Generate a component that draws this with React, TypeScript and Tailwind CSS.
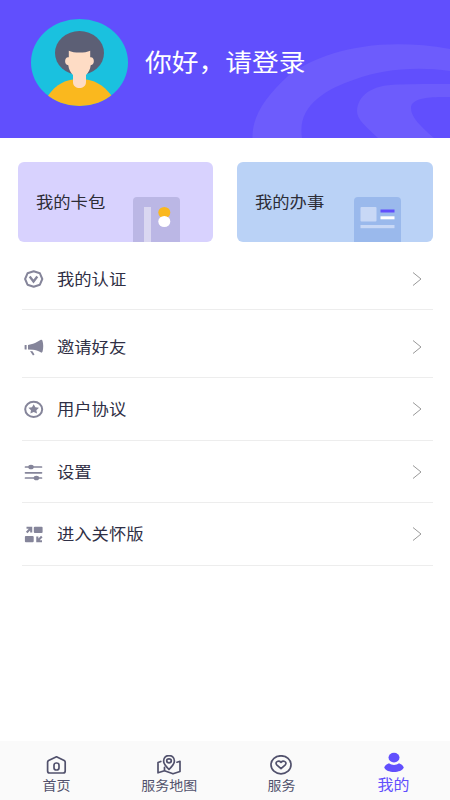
import type { ReactNode } from "react";

const Avatar = () => (
	<svg viewBox="0 0 97 87" className="h-[87px] w-[97px]">
		<clipPath id="avatar">
			<ellipse cx="48.5" cy="43.5" rx="48.5" ry="43.5" />
		</clipPath>
		<g clipPath="url(#avatar)">
			<rect width="97" height="87" fill="#1ac1df" />
			<ellipse cx="48.5" cy="34" rx="24.5" ry="22" fill="#5c5f75" />
			<path
				d="M15 80C21 70 30 60 48.5 60S76 70 83 80V90H15Z"
				fill="#fab81e"
			/>
			<path
				d="M37.800 31.700C43 34.200 54 34.200 59.200 31.700V38.300C64 37.500 64 46 59.700 46.300C59.200 50.500 57.500 53.500 55 56V63C55 71 42 71 42 63V56C39.500 53.500 37.800 50.500 37.300 46.300C33 46 33 37.500 37.800 38.300Z"
				fill="#fedcc5"
			/>
		</g>
	</svg>
);

const Swirl = () => (
	<svg
		viewBox="0 0 200 100"
		className="absolute right-0 bottom-0 h-[100px] w-[200px]"
		fill="#6d5cfc"
	>
		<path d="M2.500 100C2 78 16 58 38 38C70 14 125 -2 200 11V33C165 28 130 32 106 41C73 52 47 69 52 100Z" />
		<path d="M128 100C115 88 107 81 107 73C108 58 120 47 148 46.500C165 45.500 183 46 200 46V59C187 59 161 58 161 70C161 79 170 88 184 100Z" />
	</svg>
);

const WalletArt = () => (
	<svg viewBox="0 0 47 45" className="h-[45px] w-[47px]">
		<path d="M0 45V4Q0 0 4 0H43Q47 0 47 4V45Z" fill="#bbb7e5" />
		<path d="M11 45V10H18V45Z" fill="#dad7f1" />
		<ellipse cx="31.300" cy="15.500" rx="6" ry="5.600" fill="#fab81e" />
		<ellipse cx="31.300" cy="24.500" rx="6" ry="5.500" fill="#fff" />
	</svg>
);

const AffairsArt = () => (
	<svg viewBox="0 0 47 45" className="h-[45px] w-[47px]">
		<path d="M0 45V4Q0 0 4 0H43Q47 0 47 4V45Z" fill="#9ab9ec" />
		<rect x="6.500" y="10" width="16" height="14.500" rx="1" fill="#c8d8f6" />
		<rect x="26.500" y="12.500" width="14" height="3" fill="#614ffd" />
		<rect x="26.500" y="19.300" width="14" height="3" fill="#fff" />
		<rect x="6.500" y="28" width="34" height="3.200" fill="#c8d8f6" />
	</svg>
);

const ICON = "h-[18px] w-5 shrink-0";

const VerifyIcon = () => (
	<svg viewBox="0 0 20 18" className={ICON} fill="none" stroke="#85859a" strokeWidth="2">
		<path d="M9.700 1.200L15.900 3.300L18.300 9L15.900 14.700L9.700 16.800L3.500 14.700L1.100 9L3.500 3.300Z" strokeLinejoin="round" />
		<path d="M5.700 6.500L9.500 11.500L13.300 6.500" strokeWidth="2.300" />
	</svg>
);

const InviteIcon = () => (
	<svg viewBox="0 0 20 18" className={ICON} fill="#85859a">
		<rect x="0.600" y="7" width="2" height="4.500" rx="0.500" />
		<path d="M4 7L9 5.700C12 4.800 14 3.300 16.500 2C17.500 1.500 18.100 1.800 18.400 2.600C19.500 6 19.500 10 18.600 13.500C18.200 14.700 17.500 14.900 16.600 14.300C14 12.800 11.500 12 9 11.700L4 11.500Z" />
		<path d="M6 13L8.500 13.200L10.500 16.500L9 17.600Z" />
	</svg>
);

const AgreementIcon = () => (
	<svg viewBox="0 0 20 18" className={ICON}>
		<ellipse cx="9.700" cy="9.300" rx="8.500" ry="7.600" fill="none" stroke="#85859a" strokeWidth="2" />
		<path
			d="M9.700 4.200L11.400 7.300L15 7.800L12.400 10.200L13 13.600L9.700 12L6.400 13.600L7 10.200L4.400 7.800L8 7.300Z"
			fill="#85859a"
		/>
	</svg>
);

const SettingsIcon = () => (
	<svg viewBox="0 0 20 18" className={ICON} fill="#85859a" stroke="#85859a" strokeWidth="1.700" strokeLinecap="round">
		<path d="M1.500 4H17.500M1.500 9.800H17.500M1.500 15H17.500" />
		<ellipse cx="7" cy="4" rx="1.900" ry="1.500" />
		<ellipse cx="12.400" cy="15" rx="1.900" ry="1.500" />
	</svg>
);

const CareIcon = () => (
	<svg viewBox="0 0 20 18" className={ICON} fill="#85859a">
		<rect x="9.800" y="1.700" width="8.800" height="6.400" rx="1" />
		<rect x="0.900" y="10.900" width="8.800" height="6.400" rx="1" />
		<path
			d="M2.500 2.700H7.200V7.500M7.200 2.700L2.700 7.500M18 16.300H13.300V11.500M13.300 16.300L17.800 11.500"
			fill="none"
			stroke="#85859a"
			strokeWidth="2.100"
		/>
	</svg>
);

const HomeIcon = () => (
	<svg viewBox="0 0 22 20" className="h-5 w-[22px]" fill="none" stroke="#51516c" strokeWidth="1.700" strokeLinejoin="round">
		<path d="M11.500 1.800L19.200 5.500Q20.200 6.100 20.200 7.100V16Q20.200 18 18.200 18H4.600Q2.600 18 2.600 16V7.100Q2.600 6.100 3.600 5.500Z" />
		<rect x="9" y="8" width="5" height="7" rx="2.300" />
	</svg>
);

const MapIcon = () => (
	<svg viewBox="0 0 26 20" className="h-5 w-[26px]" fill="none" stroke="#51516c" strokeWidth="1.700" strokeLinejoin="round" strokeLinecap="round">
		<path d="M13 14.500C9.500 11 7.600 8.700 7.600 6C7.600 -1.300 18.400 -1.300 18.400 6C18.400 8.700 16.500 11 13 14.500Z" />
		<ellipse cx="13" cy="5.800" rx="2.300" ry="2" />
		<path d="M4.800 6.500L2 7.500V17.800L8.500 15.700L17 18.800L24 16.500V6.300L21 7.200M8.500 12.300V15.500" />
	</svg>
);

const ServiceIcon = () => (
	<svg viewBox="0 0 22 20" className="h-5 w-[22px]" fill="none" stroke="#51516c" strokeWidth="1.700" strokeLinejoin="round">
		<ellipse cx="11" cy="9.800" rx="10" ry="9" />
		<path d="M11 13.700L6.700 9.800C4.500 7.200 8.500 4.800 11 7.300C13.500 4.800 17.500 7.200 15.300 9.800Z" />
	</svg>
);

const MineIcon = () => (
	<svg viewBox="0 0 22 20" className="h-5 w-[22px]" fill="#614ffd">
		<ellipse cx="11" cy="5.600" rx="5.500" ry="4.900" />
		<path d="M1.200 15.500C2 13.200 4 12 6 11.300C9 13.500 13 13.500 16 11.300C18 12 20 13.200 20.800 15.500C18.500 21.500 3.500 21.500 1.200 15.500Z" />
	</svg>
);

const menu = [
	{ label: "我的认证", icon: <VerifyIcon />, height: "h-[62px]" },
	{ label: "邀请好友", icon: <InviteIcon />, height: "h-[68px] pt-1.5" },
	{ label: "用户协议", icon: <AgreementIcon />, height: "h-[63px]" },
	{ label: "设置", icon: <SettingsIcon />, height: "h-[62px]" },
	{ label: "进入关怀版", icon: <CareIcon />, height: "h-[63px]" },
];

const tabs = [
	{ label: "首页", icon: <HomeIcon /> },
	{ label: "服务地图", icon: <MapIcon /> },
	{ label: "服务", icon: <ServiceIcon /> },
];

const Card = ({ title, color, art }: { title: string; color: string; art: ReactNode }) => (
	<div className={`flex h-20 justify-between rounded-md pl-[18px] ${color}`}>
		<span className="origin-left scale-x-[1.11] self-center whitespace-nowrap text-[#2d2d36] text-[15.6px]">
			{title}
		</span>
		<div className="self-end">{art}</div>
	</div>
);

export default function App() {
	return (
		<div className="flex h-[800px] w-[450px] flex-col overflow-hidden bg-white font-['Noto_Sans_CJK_SC',sans-serif]">
			<header className="relative flex h-[138px] shrink-0 items-start bg-[#614ffd] pt-[19px] pl-[31px]">
				<Swirl />
				<Avatar />
				<h1 className="relative mt-6 ml-[17px] origin-left scale-x-[1.115] whitespace-nowrap text-2xl text-white leading-9">
					你好，请登录
				</h1>
			</header>

			<div className="mt-6 grid grid-cols-[195px_196px] gap-6 pl-[18px]">
				<Card title="我的卡包" color="bg-[#d8d2fe] pr-[33px]" art={<WalletArt />} />
				<Card title="我的办事" color="bg-[#bad2f6] pr-8" art={<AffairsArt />} />
			</div>

			<ul className="mt-[6px] mr-[17px] ml-[22px]">
				{menu.map((item) => (
					<li
						key={item.label}
						className={`flex items-center border-[#ededed] border-b pr-[11px] pl-[2px] ${item.height}`}
					>
						{item.icon}
						<span className="ml-[13px] origin-left scale-x-[1.11] text-[#2f2f45] text-[15.6px]">
							{item.label}
						</span>
						<svg viewBox="0 0 10 16" className="ml-auto h-4 w-[10px]" fill="none" stroke="#999">
							<path d="M1 1.500L9 8L1 14.500" />
						</svg>
					</li>
				))}
			</ul>

			<nav className="mt-auto grid h-[59px] grid-cols-4 bg-[#fafafa] text-[#51516c]">
				{tabs.map((tab) => (
					<div key={tab.label} className="flex flex-col items-center pt-[14px]">
						{tab.icon}
						<span className="mt-px scale-x-[1.11] text-[12.6px] leading-[18px]">{tab.label}</span>
					</div>
				))}
				<div className="flex flex-col items-center pt-[11px] text-[#614ffd]">
					<MineIcon />
					<span className="mt-[2px] scale-x-[1.11] text-[14.4px] leading-5">我的</span>
				</div>
			</nav>
		</div>
	);
}
